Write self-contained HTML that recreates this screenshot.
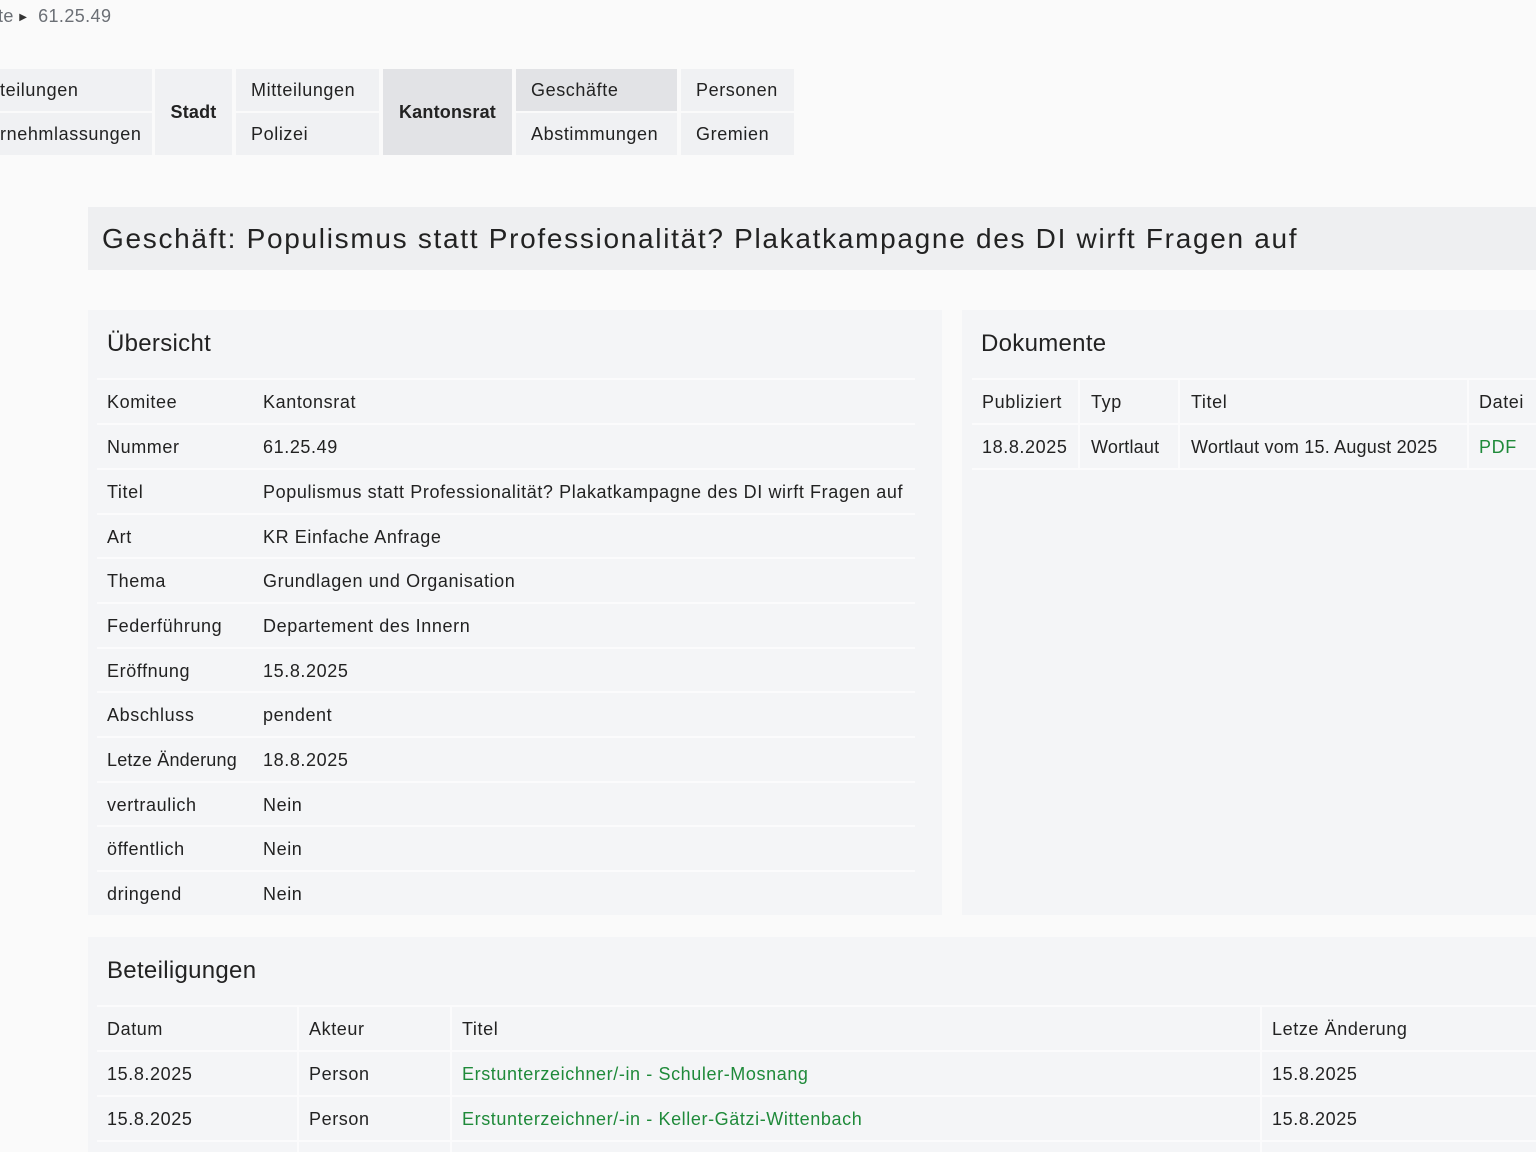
<!DOCTYPE html>
<html style="height:1152px;overflow:hidden"><head><meta charset="utf-8"><style>
body{margin:0;width:1536px;height:1152px;overflow:hidden;background:#fafafa;font-family:"Liberation Sans",sans-serif;color:#222;position:relative}
.a{position:absolute}
.nav{position:absolute;background:#f0f1f3;font-size:18px;letter-spacing:0.6px;display:flex;align-items:center;box-sizing:border-box;padding-left:15px;white-space:nowrap;overflow:hidden}
.act{background:#e2e3e6}
.b{font-weight:bold;justify-content:center;padding:0;letter-spacing:0.2px}
.panel{position:absolute;background:#f4f5f7}
.row{position:absolute;height:43px;border-top:2px solid #fbfbfc;font-size:18px;letter-spacing:0.6px;line-height:45px;white-space:nowrap}
.row span{position:absolute}
.g{color:#1f8a3a}
h2{position:absolute;margin:0;font-weight:normal;font-size:24px;letter-spacing:0.3px}
.vs{position:absolute;width:2px;background:#fbfbfc}
</style></head><body>
<div class="a" style="left:-2px;top:6px;font-size:18px;color:#6b6f75;letter-spacing:0.4px">te <span style="font-size:10px;color:#333;position:relative;top:-2px">&#9654;</span>&nbsp; 61.25.49</div>

<div class="nav" style="left:-40px;top:69px;width:192px;height:42px;padding-left:40px">teilungen</div>
<div class="nav" style="left:-40px;top:113px;width:192px;height:42px;padding-left:40px">rnehmlassungen</div>
<div class="nav b" style="left:155px;top:69px;width:77px;height:86px">Stadt</div>
<div class="nav" style="left:236px;top:69px;width:143px;height:42px">Mitteilungen</div>
<div class="nav" style="left:236px;top:113px;width:143px;height:42px">Polizei</div>
<div class="nav b act" style="left:383px;top:69px;width:129px;height:86px">Kantonsrat</div>
<div class="nav act" style="left:516px;top:69px;width:161px;height:42px">Geschäfte</div>
<div class="nav" style="left:516px;top:113px;width:161px;height:42px">Abstimmungen</div>
<div class="nav" style="left:681px;top:69px;width:113px;height:42px">Personen</div>
<div class="nav" style="left:681px;top:113px;width:113px;height:42px">Gremien</div>

<div class="a" style="left:88px;top:207px;width:1448px;height:63px;background:#eeeff1"></div>
<div class="a" style="left:102px;top:223px;font-size:28px;letter-spacing:1.7px;white-space:nowrap">Geschäft: Populismus statt Professionalität? Plakatkampagne des DI wirft Fragen auf</div>

<div class="panel" style="left:88px;top:310px;width:854px;height:605px"></div>
<h2 style="left:107px;top:330px">Übersicht</h2>
<div class="panel" style="left:962px;top:310px;width:574px;height:605px"></div>
<h2 style="left:981px;top:330px">Dokumente</h2>

<div style="position:absolute;left:97px;top:0;width:818px">
<div class="row" style="top:378px;width:818px"><span style="left:10px">Komitee</span><span style="left:166px">Kantonsrat</span></div>
<div class="row" style="top:423px;width:818px"><span style="left:10px">Nummer</span><span style="left:166px">61.25.49</span></div>
<div class="row" style="top:468px;width:818px"><span style="left:10px">Titel</span><span style="left:166px">Populismus statt Professionalität? Plakatkampagne des DI wirft Fragen auf</span></div>
<div class="row" style="top:513px;width:818px"><span style="left:10px">Art</span><span style="left:166px">KR Einfache Anfrage</span></div>
<div class="row" style="top:557px;width:818px"><span style="left:10px">Thema</span><span style="left:166px">Grundlagen und Organisation</span></div>
<div class="row" style="top:602px;width:818px"><span style="left:10px">Federführung</span><span style="left:166px">Departement des Innern</span></div>
<div class="row" style="top:647px;width:818px"><span style="left:10px">Eröffnung</span><span style="left:166px">15.8.2025</span></div>
<div class="row" style="top:691px;width:818px"><span style="left:10px">Abschluss</span><span style="left:166px">pendent</span></div>
<div class="row" style="top:736px;width:818px"><span style="left:10px;letter-spacing:0.2px">Letze Änderung</span><span style="left:166px">18.8.2025</span></div>
<div class="row" style="top:781px;width:818px"><span style="left:10px">vertraulich</span><span style="left:166px">Nein</span></div>
<div class="row" style="top:825px;width:818px"><span style="left:10px">öffentlich</span><span style="left:166px">Nein</span></div>
<div class="row" style="top:870px;width:818px"><span style="left:10px">dringend</span><span style="left:166px">Nein</span></div>
</div>

<div style="position:absolute;left:972px;top:0;width:564px">
<div class="row" style="top:378px;width:564px;border-bottom:2px solid #fbfbfc"><span style="left:10px">Publiziert</span><span style="left:119px">Typ</span><span style="left:219px">Titel</span><span style="left:507px">Datei</span></div>
<div class="row" style="top:423px;width:564px;border-bottom:2px solid #fbfbfc"><span style="left:10px">18.8.2025</span><span style="left:119px;letter-spacing:0.2px">Wortlaut</span><span style="left:219px;letter-spacing:0.2px">Wortlaut vom 15. August 2025</span><span class="g" style="left:507px">PDF</span></div>
</div>
<div class="vs" style="left:1078px;top:380px;height:88px"></div>
<div class="vs" style="left:1178px;top:380px;height:88px"></div>
<div class="vs" style="left:1467px;top:380px;height:88px"></div>

<div class="panel" style="left:88px;top:937px;width:1448px;height:215px"></div>
<h2 style="left:107px;top:957px">Beteiligungen</h2>
<div style="position:absolute;left:97px;top:0;width:1439px">
<div class="row" style="top:1005px;width:1439px"><span style="left:10px">Datum</span><span style="left:212px">Akteur</span><span style="left:365px">Titel</span><span style="left:1175px">Letze Änderung</span></div>
<div class="row" style="top:1050px;width:1439px"><span style="left:10px">15.8.2025</span><span style="left:212px">Person</span><span class="g" style="left:365px">Erstunterzeichner/-in - Schuler-Mosnang</span><span style="left:1175px">15.8.2025</span></div>
<div class="row" style="top:1095px;width:1439px"><span style="left:10px">15.8.2025</span><span style="left:212px">Person</span><span class="g" style="left:365px">Erstunterzeichner/-in - Keller-Gätzi-Wittenbach</span><span style="left:1175px">15.8.2025</span></div>
<div class="row" style="top:1140px;width:1439px;height:10px"></div>
</div>
<div class="vs" style="left:297px;top:1007px;height:145px"></div>
<div class="vs" style="left:450px;top:1007px;height:145px"></div>
<div class="vs" style="left:1260px;top:1007px;height:145px"></div>
</body></html>
